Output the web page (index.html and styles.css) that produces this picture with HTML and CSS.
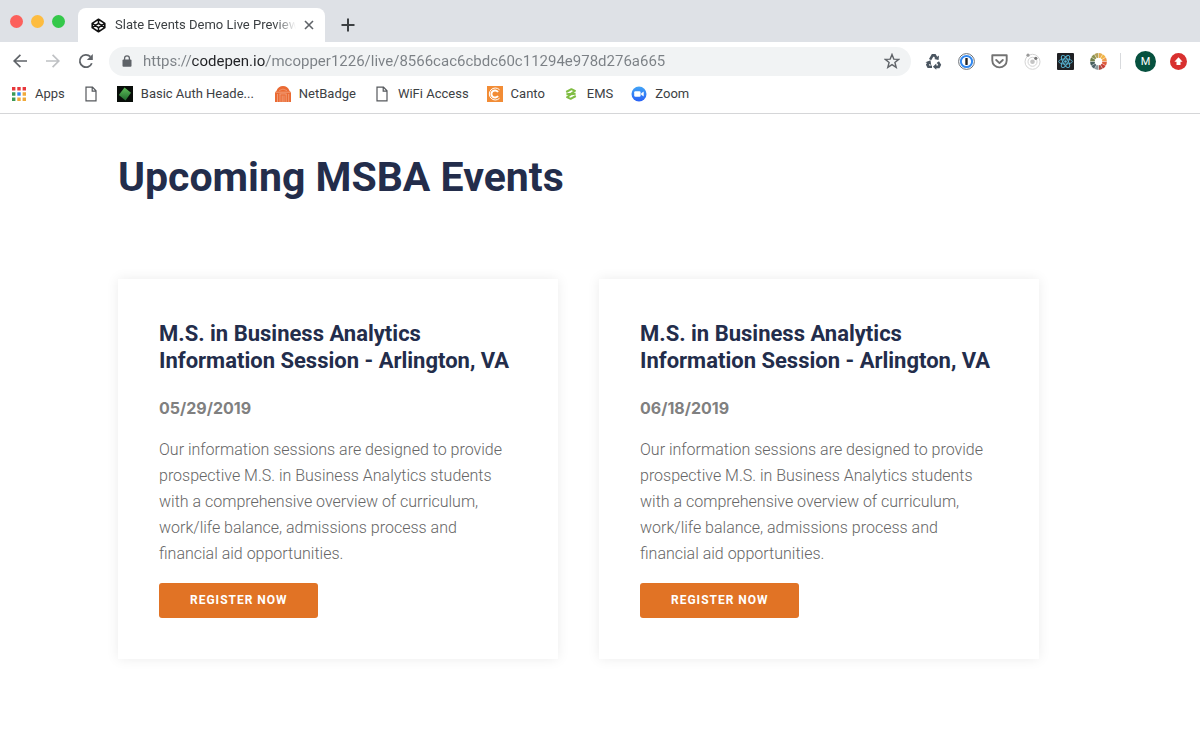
FILE: index.html
```html
<!DOCTYPE html>
<html lang="en">
<head>
<meta charset="utf-8">
<title>Slate Events Demo Live Preview</title>
<link rel="stylesheet" href="styles.css">
</head>
<body>
<header class="browser">
  <div class="tab-strip">
    <div class="window-controls">
      <button class="light light-close" aria-label="Close window"></button>
      <button class="light light-min" aria-label="Minimize window"></button>
      <button class="light light-max" aria-label="Maximize window"></button>
    </div>
    <div class="tab">
      <svg class="favicon" viewBox="0 0 16 16" fill="none" stroke="#111" stroke-width="1.7" stroke-linejoin="round"><path d="M8 1.3 14.7 5.7v4.6L8 14.7 1.3 10.3V5.7zM8 1.3v4.2M8 10.5v4.2M1.3 5.7 8 10.3l6.7-4.6M1.3 10.3 8 5.7l6.7 4.6"/></svg>
      <span class="tab-title">Slate Events Demo Live Preview</span>
      <button class="icon-button tab-close" aria-label="Close tab"><svg viewBox="0 0 10 10" width="10" height="10" stroke="#5f6368" stroke-width="1.6"><path d="M1 1l8 8M9 1 1 9"/></svg></button>
    </div>
    <button class="icon-button new-tab" aria-label="New tab"><svg viewBox="0 0 14 14" width="14" height="14" stroke="#3c4043" stroke-width="2"><path d="M7 .5v13M.5 7h13"/></svg></button>
  </div>

  <div class="toolbar">
    <div class="nav-buttons">
      <button class="icon-button" aria-label="Back"><svg viewBox="0 0 16 16" width="16" height="16" fill="none" stroke="#5f6368" stroke-width="1.7"><path d="M15 8H2.4M8.4 1.8 2.2 8l6.2 6.2"/></svg></button>
      <button class="icon-button" aria-label="Forward" disabled><svg viewBox="0 0 16 16" width="16" height="16" fill="none" stroke="#bfc1c4" stroke-width="1.7"><path d="M1 8h12.6M7.6 1.8 13.8 8l-6.2 6.2"/></svg></button>
      <button class="icon-button" aria-label="Reload"><svg viewBox="0 0 16 16" width="16" height="16" fill="none" stroke="#5f6368" stroke-width="1.8"><path d="M13.8 10.2A6.2 6.2 0 1 1 12.4 3.6"/><path d="M14.8 1v6H8.8z" fill="#5f6368" stroke="none"/></svg></button>
    </div>
    <div class="address">
      <svg class="lock" viewBox="0 0 10 12"><rect x=".5" y="4.5" width="9" height="7.2" rx="1" fill="#5f6368"/><path d="M2.6 5V3.2a2.4 2.4 0 0 1 4.8 0V5" fill="none" stroke="#5f6368" stroke-width="1.3"/></svg>
      <input class="url" type="text" aria-label="Address" value="https://codepen.io/mcopper1226/live/8566cac6cbdc60c11294e978d276a665">
      <button class="icon-button" aria-label="Bookmark this page"><svg viewBox="0 0 16 16" width="16" height="16" fill="none" stroke="#5f6368" stroke-width="1.4"><path d="m8 1.5 1.8 4.6 4.9.3-3.8 3.1 1.3 4.9L8 11.7l-4.2 2.7 1.3-4.9-3.8-3.1 4.9-.3z"/></svg></button>
    </div>
    <div class="extensions">
      <button class="icon-button" aria-label="Recycle"><svg viewBox="0 0 17 17" width="17" height="17" fill="none" stroke="#4a5560" stroke-width="2.6"><path d="M5.1 6.6 7.6 2.4h2.2l1.6 2.5"/><path d="m9.2 6 4.4 1L14 2.4z" fill="#4a5560" stroke="none"/><path d="m12.9 9 1.8 2.9-1 2h-3"/><path d="M11.3 10.5v6.2L7.9 13.7z" fill="#4a5560" stroke="none"/><path d="M7 13.8H3.4l-1-2 1.4-2.5"/><path d="m.5 9.3 5-2.1.7 4.7z" fill="#4a5560" stroke="none"/></svg></button>
      <button class="icon-button" aria-label="Password manager"><svg viewBox="0 0 17 17" width="17" height="17"><circle cx="8.5" cy="8.5" r="7.9" fill="#fff" stroke="#6d7278" stroke-width="1"/><circle cx="8.5" cy="8.5" r="5.6" fill="#fff" stroke="#3188f0" stroke-width="2"/><rect x="7.3" y="5" width="2.4" height="7" rx=".4" fill="#222"/></svg></button>
      <button class="icon-button" aria-label="Pocket"><svg viewBox="0 0 17 17" width="17" height="17" fill="none" stroke="#737373" stroke-width="1.9" stroke-linejoin="round" stroke-linecap="round"><path d="M1.3 2.3h14.4v5.1a7.2 7 0 0 1-14.4 0z"/><path d="m5.2 7 3.3 3.1L11.8 7"/></svg></button>
      <button class="icon-button" aria-label="Orbit"><svg viewBox="0 0 17 17" width="17" height="17" fill="none" stroke="#d4d4d4"><circle cx="8.5" cy="8.8" r="7.5"/><circle cx="8.5" cy="8.8" r="4.5"/><circle cx="8.5" cy="8.8" r="2.3" fill="#c4c4c4" stroke="none"/><circle cx="4" cy="2.2" r="1.6" fill="#999" stroke="none"/><circle cx="11.8" cy="5.3" r="1.6" fill="#777" stroke="none"/></svg></button>
      <button class="icon-button" aria-label="React tools"><svg viewBox="0 0 17 17" width="17" height="17" fill="none" stroke="#58b7d6" stroke-width=".9"><rect width="17" height="17" rx="1" fill="#202124" stroke="none"/><ellipse cx="8.5" cy="8.5" rx="6.8" ry="2.6"/><ellipse cx="8.5" cy="8.5" rx="6.8" ry="2.6" transform="rotate(60 8.5 8.5)"/><ellipse cx="8.5" cy="8.5" rx="6.8" ry="2.6" transform="rotate(120 8.5 8.5)"/><circle cx="8.5" cy="8.5" r="1.3" fill="#58b7d6" stroke="none"/></svg></button>
      <button class="icon-button" aria-label="Color wheel"><svg viewBox="0 0 17 17" width="17" height="17" fill="none" stroke-width="4.6"><path d="M8.5 2.4A6.1 6.1 0 0 1 11.55 3.22" stroke="#e9ad4c"/><path d="M11.55 3.22A6.1 6.1 0 0 1 13.78 5.45" stroke="#f2b544"/><path d="M13.78 5.45A6.1 6.1 0 0 1 14.6 8.5" stroke="#ee9a4d"/><path d="M14.6 8.5A6.1 6.1 0 0 1 13.78 11.55" stroke="#df5b3b"/><path d="M13.78 11.55A6.1 6.1 0 0 1 11.55 13.78" stroke="#c93d35"/><path d="M11.55 13.78A6.1 6.1 0 0 1 8.5 14.6" stroke="#a84b42"/><path d="M8.5 14.6A6.1 6.1 0 0 1 5.45 13.78" stroke="#8b9a9e"/><path d="M5.45 13.78A6.1 6.1 0 0 1 3.22 11.55" stroke="#51646b"/><path d="M3.22 11.55A6.1 6.1 0 0 1 2.4 8.5" stroke="#48605e"/><path d="M2.4 8.5A6.1 6.1 0 0 1 3.22 5.45" stroke="#71804c"/><path d="M3.22 5.45A6.1 6.1 0 0 1 5.45 3.22" stroke="#8d9350"/><path d="M5.45 3.22A6.1 6.1 0 0 1 8.5 2.4" stroke="#b4a25a"/><path d="M8.5 0v17M0 8.5h17M4.25 1.14l8.5 14.72M1.14 4.25l14.72 8.5M12.75 1.14l-8.5 14.72M15.86 4.25l-14.72 8.5" stroke="#fff" stroke-width=".4"/><circle cx="8.5" cy="8.5" r="3.5" fill="#fff"/></svg></button>
    </div>
    <div class="profile">
      <button class="avatar" aria-label="Profile">M</button>
      <button class="icon-button" aria-label="Update"><svg viewBox="0 0 17 17" width="17" height="17"><circle cx="8.5" cy="8.5" r="8.5" fill="#d8302f"/><path d="M8.5 4.2 12.6 8.7h-2.1v3.4h-4V8.7H4.4z" fill="#fff"/></svg></button>
    </div>
  </div>

  <nav class="bookmarks" aria-label="Bookmarks">
    <a class="bookmark" href="#"><svg viewBox="0 0 16 16"><g fill="#e8373b"><path d="M1 1h3.4v3.4H1zM6.3 1h3.4v3.4H6.3zM11.6 1H15v3.4h-3.4z"/></g><path d="M1 6.3h3.4v3.4H1zM1 11.6h3.4V15H1z" fill="#3b9a57"/><path d="M6.3 6.3h3.4v3.4H6.3z" fill="#2f86f5"/><path d="M11.6 6.3H15v3.4h-3.4zM6.3 11.6h3.4V15H6.3zM11.6 11.6H15V15h-3.4z" fill="#f0a93a"/></svg>Apps</a>
    <a class="bookmark" href="#" aria-label="Untitled bookmark"><svg viewBox="0 0 16 16" fill="none" stroke="#55585c" stroke-width="1.2"><path d="M3 1.2h6.5l3.5 3.6v10H3zM9.2 1.2v4H13"/></svg></a>
    <a class="bookmark" href="#"><svg viewBox="0 0 16 16"><defs><linearGradient id="gem" x2="0" y2="1"><stop stop-color="#5fbd59"/><stop offset="1" stop-color="#1f6a2d"/></linearGradient></defs><path fill="#080d09" d="M0 0h16v16H0z"/><path fill="url(#gem)" d="M7.5 1.5 14 6.8 8.5 14.5 1.8 9z"/></svg><span class="long-label">Basic Auth Heade...</span></a>
    <a class="bookmark" href="#"><svg viewBox="0 0 16 16"><path fill="#ea6a33" d="M0 16V6.2L1.4 5C2.6 1.7 5 0 8 0s5.4 1.7 6.6 5L16 6.2V16z"/><path d="M0 6.2h16M2.5 8v8M5 8v8M7.2 9.5V16M9 9.5V16M11.2 8v8M13.7 8v8M4.5 7.9h7" stroke="#f9cfb9" stroke-width=".5"/><path d="M4 4.6q4-3 8 0" fill="none" stroke="#f9cfb9" stroke-width=".4"/></svg>NetBadge</a>
    <a class="bookmark" href="#"><svg viewBox="0 0 16 16" fill="none" stroke="#55585c" stroke-width="1.2"><path d="M3 1.2h6.5l3.5 3.6v10H3zM9.2 1.2v4H13"/></svg>WiFi Access</a>
    <a class="bookmark" href="#"><svg viewBox="0 0 16 16" fill="none" stroke="#fff"><path fill="#f28c35" stroke="none" d="M0 0h16v16H0z"/><path d="M12.5 3.7A6 6 0 1 0 12.5 12.3" stroke-width="1"/><path d="M11 6A3.6 3.6 0 1 0 11 10" stroke-width="2"/></svg>Canto</a>
    <a class="bookmark" href="#"><svg viewBox="0 0 16 16" fill="none" stroke="#80bd43" stroke-width="2" stroke-linejoin="round"><path d="M3.2 6 8.4 3.2l3.6 1.6-4 3L3.400 8.200"/><path d="M12.800 10 7.600 12.800 4 11.200l4-3 4.600-.4"/></svg>EMS</a>
    <a class="bookmark" href="#"><svg viewBox="0 0 16 16"><defs><linearGradient id="cam" x2="0" y2="1"><stop stop-color="#42a5f6"/><stop offset="1" stop-color="#2860f5"/></linearGradient></defs><circle cx="8" cy="8" r="7.5" fill="url(#cam)"/><rect x="3.2" y="5.3" width="6.4" height="5.4" rx="1.2" fill="#fff"/><path d="m10.2 7.3 2.5-1.9v5.2l-2.5-1.9z" fill="#fff"/></svg>Zoom</a>
  </nav>
</header>

<main class="page">
  <h1 class="page-title">Upcoming MSBA Events</h1>
  <div class="events">
    <article class="card">
      <h2 class="card-title">M.S. in Business Analytics Information Session - Arlington, VA</h2>
      <p class="card-date">05/29/2019</p>
      <p class="card-text">Our information sessions are designed to provide prospective M.S. in Business Analytics students with a comprehensive overview of curriculum, work/life balance, admissions process and financial aid opportunities.</p>
      <a class="register" href="#">Register Now</a>
    </article>
    <article class="card">
      <h2 class="card-title">M.S. in Business Analytics Information Session - Arlington, VA</h2>
      <p class="card-date">06/18/2019</p>
      <p class="card-text">Our information sessions are designed to provide prospective M.S. in Business Analytics students with a comprehensive overview of curriculum, work/life balance, admissions process and financial aid opportunities.</p>
      <a class="register" href="#">Register Now</a>
    </article>
  </div>
</main>
</body>
</html>
```

FILE: styles.css
```css
* { box-sizing: border-box; }

body {
  margin: 0;
  background: #fff;
  font-family: Roboto, "Liberation Sans", sans-serif;
}

button {
  padding: 0;
  border: 0;
  background: none;
}

.icon-button {
  display: flex;
  align-items: center;
  justify-content: center;
}

/* Browser window */
.browser {
  border-bottom: 1px solid #d5d6d8;
  color: #3c4043;
}

.tab-strip {
  display: flex;
  align-items: flex-end;
  height: 42px;
  background: #dee1e6;
}

.window-controls {
  display: flex;
  align-self: center;
  gap: 8px;
  width: 78px;
  padding-left: 10px;
}

.light {
  width: 13px;
  height: 13px;
  border-radius: 50%;
}

.light-close { background: #fc605c; }
.light-min { background: #fdbc40; }
.light-max { background: #34c84a; }

.tab {
  display: flex;
  align-items: center;
  width: 247px;
  height: 34px;
  padding: 0 9px 0 13px;
  border-radius: 8px 8px 0 0;
  background: #fff;
}

.favicon {
  flex: none;
  width: 15px;
  height: 15px;
  margin-right: 9px;
}

.tab-title {
  flex: 1;
  overflow: hidden;
  font-size: 13px;
  line-height: 20px;
  white-space: nowrap;
  mask-image: linear-gradient(to right, #000 88%, transparent);
}

.tab-close {
  width: 14px;
  height: 14px;
  margin-left: 6px;
}

.new-tab {
  width: 20px;
  height: 34px;
  margin-left: 13px;
}

.toolbar {
  display: flex;
  align-items: center;
  height: 38px;
  padding: 0 13px 0 12px;
}

.nav-buttons {
  display: flex;
  gap: 17px;
  width: 97px;
}

.address {
  display: flex;
  flex: 1;
  align-items: center;
  height: 29px;
  padding: 0 11px 0 13px;
  border-radius: 15px;
  background: #f1f3f4;
}

.lock {
  width: 10px;
  height: 12px;
  margin-right: 11px;
}

.url {
  flex: 1;
  min-width: 0;
  padding: 0;
  border: 0;
  outline: 0;
  background: linear-gradient(to right, #7b8085 49px, #202124 49px, #202124 123px, #7b8085 123px);
  background-clip: text;
  color: transparent;
  font-family: Roboto, sans-serif;
  font-size: 15px;
  line-height: 20px;
}

.extensions {
  display: flex;
  gap: 16px;
  padding: 0 13px 0 14px;
}

.profile {
  display: flex;
  align-items: center;
  gap: 14px;
}

.profile::before {
  width: 1px;
  height: 16px;
  background: #d8dadd;
  content: "";
}

.avatar {
  width: 21px;
  height: 21px;
  border-radius: 50%;
  background: #07513f;
  color: #fff;
  font-family: Roboto, sans-serif;
  font-size: 11px;
}

.bookmarks {
  display: flex;
  align-items: center;
  gap: 18px;
  height: 33px;
  padding: 0 11px 5px;
}

.bookmark {
  display: flex;
  align-items: center;
  gap: 8px;
  color: #3c4043;
  font-size: 13px;
  line-height: 16px;
  text-decoration: none;
  white-space: nowrap;
}

.bookmark svg {
  width: 16px;
  height: 16px;
}

.long-label {
  min-width: 116px;
}

/* Events page */
.page {
  padding: 37px 161px 80px 118px;
}

.page-title {
  margin: 0 0 76px;
  color: #232d4b;
  font-size: 41px;
  line-height: 52px;
}

.events {
  display: grid;
  grid-template-columns: 1fr 1fr;
  gap: 41px;
}

.card {
  padding: 41px;
  background: #fff;
  box-shadow: 0 0 12px rgba(0, 0, 0, 0.08);
}

.card-title {
  margin: 0 0 21px;
  color: #232d4b;
  font-size: 22px;
  line-height: 27px;
}

.card-date {
  margin: 0 0 16px;
  color: #808080;
  font-family: Inter, sans-serif;
  font-size: 16px;
  font-weight: 700;
  line-height: 26px;
}

.card-text {
  margin: 0 0 16px;
  color: #666;
  font-size: 16px;
  font-weight: 300;
  line-height: 26px;
}

.register {
  display: inline-block;
  padding: 0 30px 0 31px;
  border-radius: 3px;
  background: #e17325;
  color: #fff;
  font-size: 12px;
  font-weight: 700;
  letter-spacing: 1px;
  line-height: 35px;
  text-decoration: none;
  text-transform: uppercase;
}
```
